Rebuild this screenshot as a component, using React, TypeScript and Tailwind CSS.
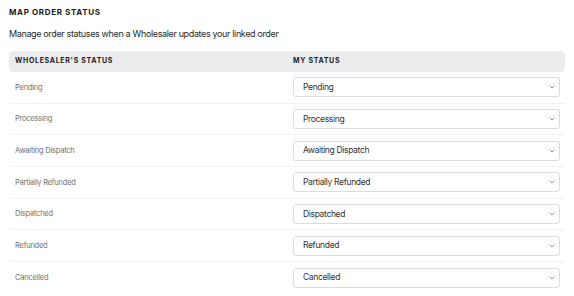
const ROWS = [
  "Pending",
  "Processing",
  "Awaiting Dispatch",
  "Partially Refunded",
  "Dispatched",
  "Refunded",
  "Cancelled",
];

function Chevron() {
  return (
    <svg
      width="6"
      height="4"
      viewBox="0 0 6 4"
      fill="none"
      className="text-[#8a8a8a]"
    >
      <path d="M0.75 0.75 3 3 5.25 0.75" stroke="currentColor" strokeWidth="0.9" />
    </svg>
  );
}

export default function App() {
  return (
    <div className="min-h-screen bg-white px-[9px] pt-[6px] font-[Inter,'Noto_Sans',sans-serif] text-[#1f1f1f]">
      <h1 className="text-[8px] font-bold uppercase leading-[12px] tracking-[0.08em] text-[#1a1a1a]">
        Map Order Status
      </h1>
      <p className="mt-[9px] text-[9px] leading-[14px] tracking-[-0.04em] text-[#2a2a2a]">
        Manage order statuses when a Wholesaler updates your linked order
      </p>

      <div className="mt-[10px] w-[556px]">
        <div className="flex h-[21px] items-center rounded-[4px] bg-[#ececee] text-[7px] font-bold uppercase tracking-[0.1em] text-[#1a1a1a]">
          <div className="w-[284px] pl-[6px]">Wholesaler&apos;s Status</div>
          <div>My Status</div>
        </div>

        {ROWS.map((status, i) => (
          <div
            key={status}
            className={`flex h-[31.67px] items-center ${
              i < ROWS.length - 1 ? "border-b border-[#f2f2f3]" : ""
            }`}
          >
            <div className="w-[284px] pl-[6px] text-[7.5px] tracking-[-0.03em] text-[#707070]">
              {status}
            </div>
            <div className="flex h-[20px] w-[267px] items-center justify-between rounded-[3px] border border-[#dcdcde] pl-[9px] pr-[4px] text-[8.5px] tracking-[-0.04em] text-[#333333]">
              <span>{status}</span>
              <Chevron />
            </div>
          </div>
        ))}
      </div>
    </div>
  );
}
